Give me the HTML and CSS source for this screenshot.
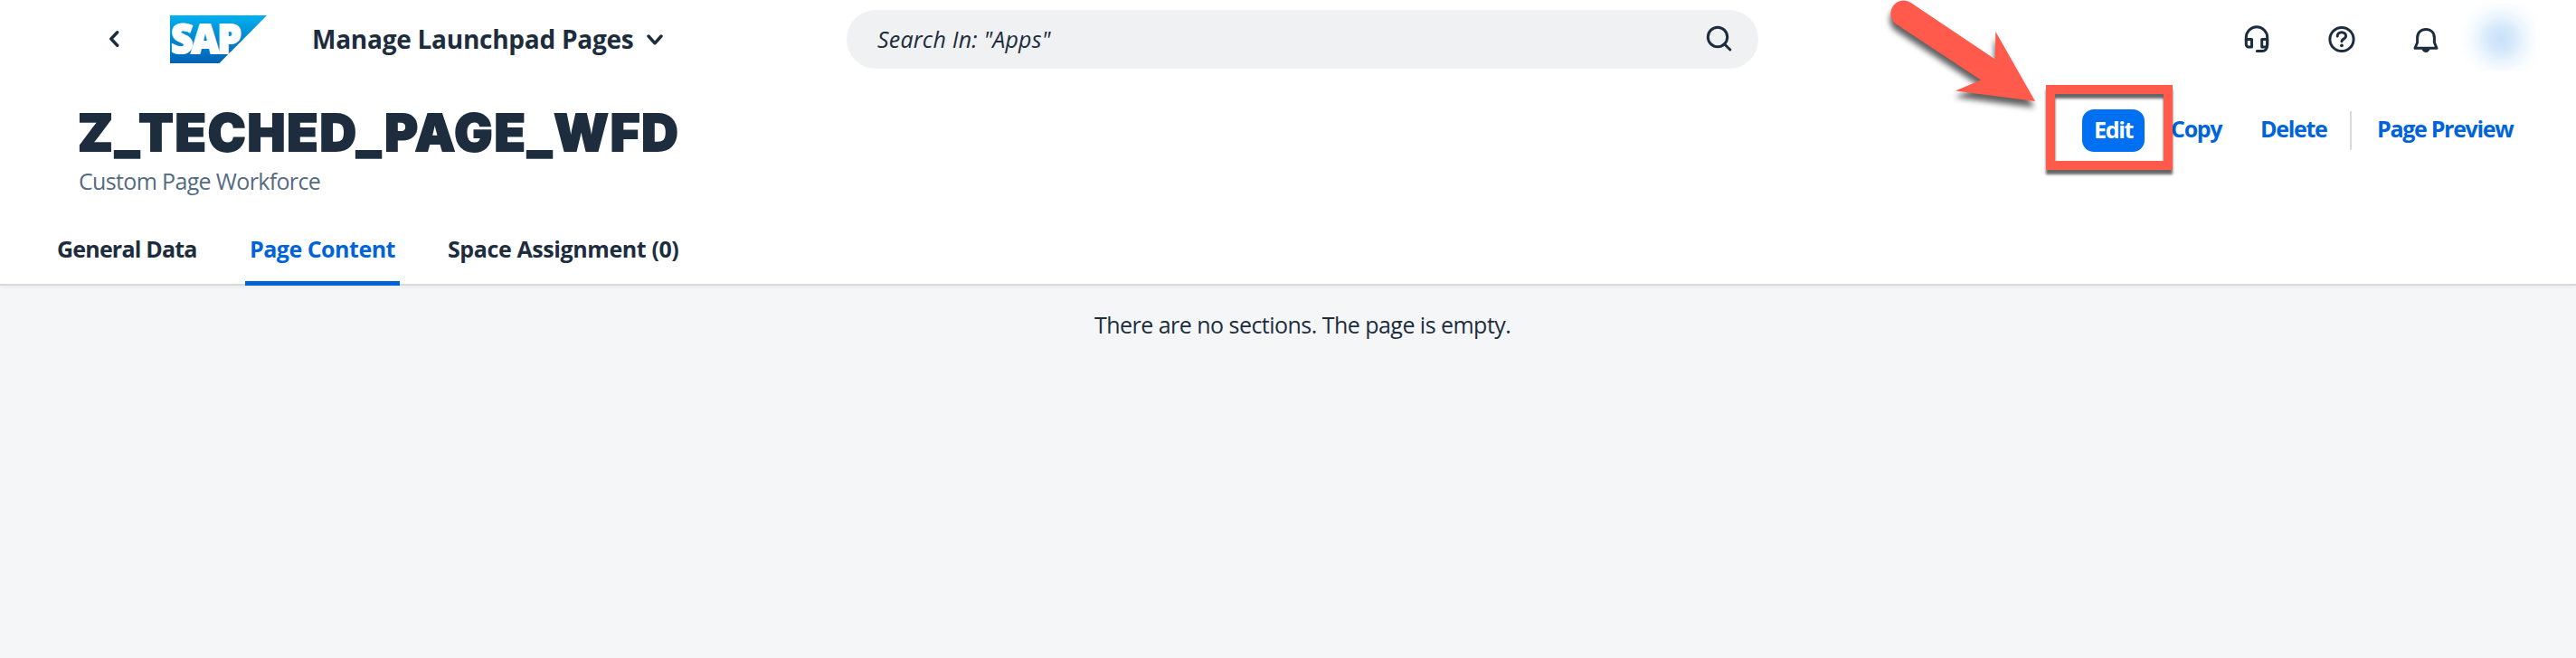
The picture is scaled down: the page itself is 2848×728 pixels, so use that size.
FILE: index.html
```html
<!DOCTYPE html>
<html lang="en">
<head>
<meta charset="utf-8">
<title>Manage Launchpad Pages</title>
<link rel="stylesheet" href="styles.css">
</head>
<body>
<header class="shell">
  <svg class="back" width="12" height="18" viewBox="0 0 12 18"><path d="M9.7 1.8 2.8 9l6.9 7.2"/></svg>
  <svg class="logo" width="107" height="53" viewBox="0 0 107 53">
    <defs><linearGradient id="sap" x1="0" y1="0" x2="0" y2="1"><stop offset="0" stop-color="#00b0ef"/><stop offset=".5" stop-color="#0086d0"/><stop offset="1" stop-color="#0062b4"/></linearGradient></defs>
    <path d="M0 0H107L54.500 53H0Z" fill="url(#sap)"/>
    <text x="1" y="42" textLength="76" lengthAdjust="spacingAndGlyphs">SAP</text>
  </svg>
  <div class="app-title"><span>Manage Launchpad Pages</span></div>
  <svg class="down" width="18" height="12" viewBox="0 0 18 12"><path d="M2 2l7 7.800L16 2"/></svg>
  <div class="search">
    <span class="hint">Search In: "Apps"</span>
    <svg class="icon" width="30" height="30" viewBox="0 0 30 30"><circle cx="13" cy="13" r="10.700"/><path d="M20.500 20.800l6.300 6.200"/></svg>
  </div>
  <nav class="tools">
    <svg class="icon" width="30" height="32" viewBox="0 0 30 32"><path d="M3.300 16.500V13.500a11.700 11.700 0 0 1 23.400 0V22c0 4-2.200 6.500-5.700 6.500H15.300"/><path d="M3.300 15.500H9.500V24H6a2.700 2.700 0 0 1-2.700-2.700ZM26.700 15.500H20.700V24H24a2.700 2.700 0 0 0 2.700-2.700Z"/></svg>
    <svg class="icon" width="30" height="32" viewBox="0 0 30 32"><circle cx="15" cy="15.500" r="13.100"/><path d="M10.200 12c0-2.600 2-4.300 4.700-4.300 2.800 0 4.700 1.700 4.700 4.100 0 3.700-4.600 3-4.600 5.900"/><circle cx="15" cy="22.300" r="1.900" class="dot"/></svg>
    <svg class="icon" width="30" height="32" viewBox="0 0 30 32"><path d="M3 25.300h24l-2.600-6.300v-5.200C24.400 8 20.500 4.500 15 4.500S5.600 8 5.600 13.800V19Z"/><path d="M10.500 26h9c-.6 2.500-2.300 4-4.500 4s-3.900-1.500-4.500-4Z" class="dot"/></svg>
  </nav>
  <div class="avatar"></div>
</header>
<section class="page-head">
  <div class="heading">
    <h1>Z_TECHED_PAGE_WFD</h1>
    <p>Custom Page Workforce</p>
  </div>
  <div class="actions">
    <button class="primary">Edit</button>
    <a class="copy">Copy</a>
    <a class="delete">Delete</a>
    <i class="divider"></i>
    <a class="preview">Page Preview</a>
  </div>
</section>
<nav class="tabs">
  <a class="tab general">General Data</a>
  <a class="tab content">Page Content</a>
  <a class="tab space">Space Assignment (0)</a>
</nav>
<main><p>There are no sections. The page is empty.</p></main>
<svg class="arrow" width="200" height="140" viewBox="2080 0 200 140"><path d="M2113 3.200 2205.700 65.500 2206.300 35 2250 112 2162 100.500 2190 88.500 2096.500 26.800A14.300 14.300 0 0 1 2113 3.200Z"/></svg>
<div class="marker"></div>
</body>
</html>
```
FILE: styles.css
```css
* { box-sizing: border-box; }
body {
  margin: 0;
  height: 728px;
  display: flex;
  flex-direction: column;
  position: relative;
  overflow: hidden;
  background: #f5f6f8;
  color: #1d2d3e;
  font: 25px/36px "Open Sans", "Noto Sans", sans-serif;
  white-space: nowrap;
}
svg { display: block; flex: none; }
p, h1 { margin: 0; }
.shell { height: 88px; padding-left: 120px; background: #fff; display: flex; }
.back, .down { fill: none; stroke: #1d2d3e; stroke-width: 3.400; stroke-linecap: round; stroke-linejoin: round; }
.back { margin-top: 34px; }
.logo { margin: 17px 0 0 56px; overflow: visible; }
.logo text { font: 800 44px "Open Sans", sans-serif; letter-spacing: -2px; fill: #fff; stroke: #fff; stroke-width: 2px; }
.app-title { width: 370px; margin: 25px 0 0 50px; font-size: 28px; font-weight: 700; letter-spacing: -.25px; }
.down { margin-top: 38px; }
.search {
  width: 1008px; height: 65px; margin: 11px 0 0 203px; padding: 0 28px 2px 34px;
  border-radius: 33px; background: #eff1f2;
  display: flex; align-items: center; justify-content: space-between;
}
.hint { font-style: italic; letter-spacing: .2px; }
.icon { fill: none; stroke: #1d2d3e; stroke-width: 3; stroke-linecap: round; stroke-linejoin: round; }
.dot { fill: #1d2d3e; stroke: none; }
.tools { display: flex; gap: 63.500px; margin: 28px 0 0 536px; }
.avatar { width: 90px; height: 74px; margin: 4px 0 0 17px; background: radial-gradient(circle at 51px 39px, #c9e0f9 0, #d6e9fb 14px, #ebf5fd 26px, #f8fcff 36px, #fff 48px); }
.page-head { height: 164px; background: #fff; padding-left: 87px; display: flex; }
.heading { width: 2215px; padding-top: 27px; }
h1 { font: 900 56px/64px Inter, sans-serif; letter-spacing: 1.900px; -webkit-text-stroke: 1.800px #1d2d3e; margin-left: -1px; }
.heading p { color: #556b82; margin-top: 3px; letter-spacing: -.65px; }
.actions { display: flex; color: #0064d9; font-weight: 700; letter-spacing: -1.300px; padding-top: 33px; line-height: 43px; }
.primary { width: 69px; height: 47px; padding: 0 0 3px; border: 0; border-radius: 13px; background: #0070f2; color: #fff; font: inherit; letter-spacing: inherit; text-align: center; }
.copy { width: 70px; margin-left: 29px; }
.delete { width: 99px; margin-left: 29px; }
.divider { width: 2px; height: 43px; margin-top: 2px; background: #d9d9d9; }
.preview { margin-left: 28px; }
.tabs { height: 64px; background: #fff; border-bottom: 2px solid #d9d9d9; box-shadow: 0 2px 4px #e9ebee; padding-left: 58px; display: flex; font-weight: 700; }
.tab { height: 64px; padding: 5px 5px 0; }
.general { width: 164px; letter-spacing: -.8px; }
.content { width: 171px; margin-left: 49px; letter-spacing: -.5px; color: #0064d9; border-bottom: 5px solid #0064d9; border-radius: 4px 4px 0 0; }
.space { margin-left: 48px; letter-spacing: -.4px; }
main { padding: 25px 0 0 1210px; letter-spacing: -.53px; }
.arrow { position: absolute; left: 2080px; top: 0; fill: #ff5a4c; filter: drop-shadow(-1px 7px 3px rgba(0, 0, 0, .62)); }
.marker { position: absolute; left: 2262px; top: 94px; width: 140px; height: 94px; border: 10px solid #ff5a4c; filter: drop-shadow(0 5px 1.500px rgba(0, 0, 0, .6)); }
```
